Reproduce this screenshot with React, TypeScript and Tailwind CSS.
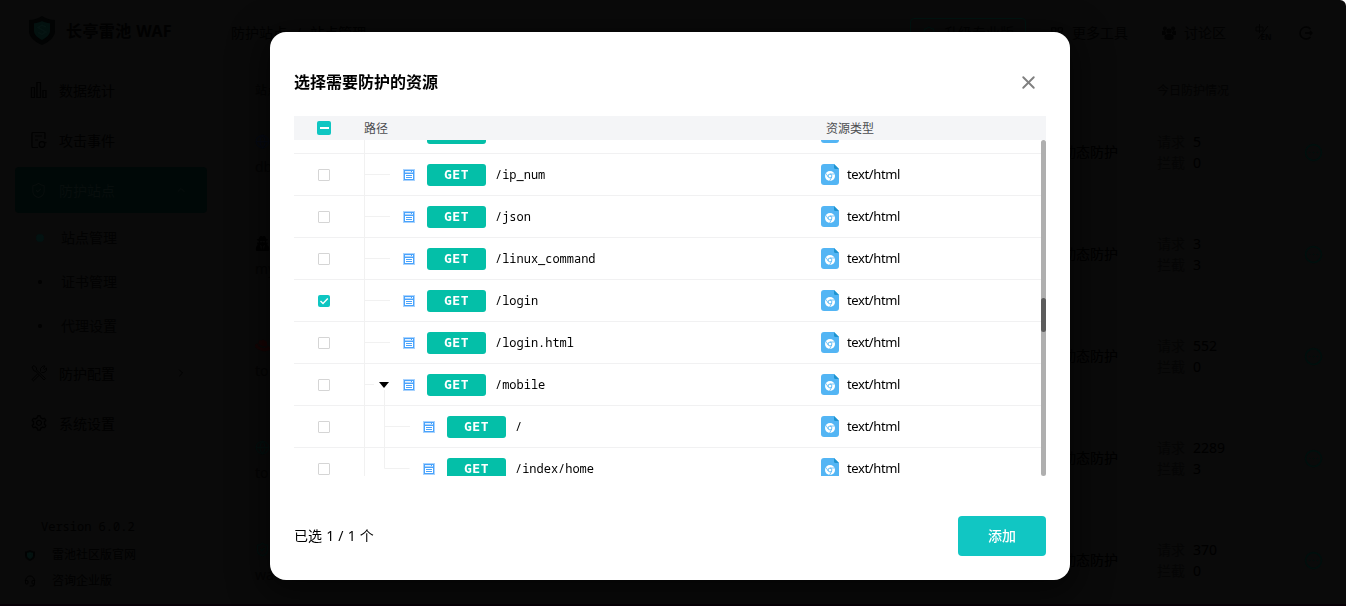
import React from 'react'
import { ChevronRight, ChevronUp, CircleEllipsis, Globe, Headset, LayoutGrid, ShieldCheck, X } from 'lucide-react'
import { FaRedhat, FaUserSecret } from 'react-icons/fa'
import { AiOutlineSetting } from 'react-icons/ai'

type Resource = {
  path: string
  child?: boolean
  last?: boolean
  open?: boolean
  checked?: boolean
}

const resources: Resource[] = [
  { path: '' },
  { path: '/ip_num' },
  { path: '/json' },
  { path: '/linux_command' },
  { path: '/login', checked: true },
  { path: '/login.html' },
  { path: '/mobile', open: true },
  { path: '/', child: true },
  { path: '/index/home', child: true, last: true },
]

const sites = [
  { name: 'db', requests: 5, blocked: 0, icon: <Globe size={15} className="text-[#070a14]" /> },
  { name: 'my', requests: 3, blocked: 3, icon: <FaUserSecret size={15} className="text-black" /> },
  { name: 'to', requests: 552, blocked: 0, icon: <FaRedhat size={15} className="text-[#160404]" /> },
  { name: 'to', requests: 2289, blocked: 3, icon: <Globe size={15} className="text-[#04100f]" /> },
  { name: 'wa', requests: 370, blocked: 0, icon: <ShieldCheck size={15} className="text-[#03100f]" /> },
]

const Logo = ({ className }: { className: string }) => (
  <svg viewBox="0 0 26 29" className={className}>
    <path d="M13 0c3 2.300 8 4 13 4v11c0 6-6 11-13 14C6 26 0 21 0 15V4c5 0 10-1.700 13-4z" fill="#020303" />
    <path d="M13 5c3 1.500 5 2 8 2.300V15c0 4-4 7-8 9-4-2-8-5-8-9V7.300C8 7 10 6.500 13 5z" fill="#03110f" />
    <path d="M17 11l-4-2-4 2.500 8 4.500-4 2.500-4-2" fill="none" stroke="#061513" strokeWidth="1.500" />
  </svg>
)

const BarsIcon = () => (
  <svg viewBox="0 0 18 18" className="h-[18px] w-[18px]" fill="none" stroke="currentColor" strokeWidth="1.200">
    <path d="M1.500 6.500h3v10h-3zM7 1.500h3.500v15H7zM13 9.500h3v7h-3z" />
  </svg>
)

const EventsIcon = () => (
  <svg viewBox="0 0 18 18" className="h-[18px] w-[18px]" fill="none" stroke="currentColor" strokeWidth="1.200">
    <path d="M15 8V2.500A1 1 0 0 0 14 1.500H3A1 1 0 0 0 2 2.500v13a1 1 0 0 0 1 1h5M5 5h7M5 9h3" />
    <circle cx="12" cy="13.500" r="2.800" />
    <path d="M14 11.500l2.500 0" />
  </svg>
)

const ToolsIcon = () => (
  <svg viewBox="0 0 18 18" className="h-[18px] w-[18px]" fill="none" stroke="currentColor" strokeWidth="1">
    <path d="M2 3l2-1.500L6.500 4v2L15.500 14.500 14 16 5.500 7H4z" />
    <path d="M10.500 7.500V4.500L13 2h2l-1.500 2.500 1 1L16.500 4v2.500L14 8.500h-2.500M7.500 10L2 15.500l1.500 1.300L9 11.500" />
  </svg>
)

const PeopleIcon = () => (
  <svg viewBox="0 0 14 14" className="h-[14px] w-[14px]" fill="currentColor">
    <circle cx="2.800" cy="2.500" r="1.900" />
    <circle cx="11.200" cy="2.500" r="1.900" />
    <circle cx="7" cy="5" r="2.600" />
    <path d="M0 9V6q0-1.500 3-1.500L4 7 3 9zM14 9V6q0-1.500-3-1.500L10 7l1 2zM2.500 13v-2.500Q2.500 8 7 8t4.500 2.500V13q-2 1-4.500 1T2.500 13z" />
  </svg>
)

const PageIcon = () => (
  <svg viewBox="0 0 12 12" className="block h-3 w-3 shrink-0" shapeRendering="crispEdges">
    <rect width="12" height="12" fill="#a9d3fe" />
    <rect x="1" y="1" width="10" height="10" fill="#4aa3fb" />
    <rect x="2" y="2" width="6" height="1" fill="#e6f2ff" />
    <rect x="9" y="2" width="1" height="1" fill="#fff" />
    <rect x="2" y="3" width="8" height="1" fill="#a9d3fe" />
    <rect x="2" y="5" width="8" height="5" fill="#fff" />
    <rect x="3" y="6" width="6" height="1" fill="#4aa3fb" />
    <rect x="3" y="8" width="6" height="1" fill="#4aa3fb" />
  </svg>
)

const HtmlIcon = () => (
  <svg viewBox="0 0 18 21" className="h-[21px] w-[18px] shrink-0">
    <path d="M3 0h10l5 5v13a3 3 0 0 1-3 3H3a3 3 0 0 1-3-3V3a3 3 0 0 1 3-3z" fill="#53b5f4" />
    <path d="M13 0l5 5h-3.500A1.500 1.500 0 0 1 13 3.500z" fill="#1f94d0" />
    <circle cx="9" cy="12" r="5" fill="#fff" />
    <circle cx="9" cy="12" r="1.900" fill="#fff" stroke="#53b5f4" strokeWidth="0.900" />
    <path d="M9 10h4.500M7.200 13L5 9.500M10.800 13l-2.200 4" stroke="#53b5f4" strokeWidth="0.800" />
  </svg>
)

const CheckBox = ({ checked }: { checked?: boolean }) =>
  checked ? (
    <span className="h-3 w-3 rounded-[2px] bg-[#0fc6c2]">
      <svg viewBox="0 0 12 12" className="h-3 w-3">
        <path d="M2.500 6l2.500 2.500L9.800 3.600" fill="none" stroke="#fff" strokeWidth="1.400" />
      </svg>
    </span>
  ) : (
    <span className="h-3 w-3 rounded-[1px] border border-[#d5d5d5]" />
  )

const TreeLines = ({ row }: { row: Resource }) => (
  <svg
    className={row.child ? 'h-[42px] w-[65px] shrink-0' : 'h-[42px] w-[45px] shrink-0'}
    fill="none"
    stroke="#f1f1f1"
  >
    <path d="M5.500 0v42" />
    {row.child && <path d={row.last ? 'M25.500 0v20.500h25' : 'M25.500 0v42M26 20.500h25'} />}
    {!row.child && <path d={row.open ? 'M6 20.500h9M25.500 26v16' : 'M6 20.500h25'} />}
    {row.open && <path d="M20 18h10l-5 6z" fill="#000" stroke="none" />}
  </svg>
)

const ResourceRow = ({ row }: { row: Resource }) => (
  <div className="flex h-[42px] shrink-0 items-center border-b border-[#f1f1f2]">
    <div className="flex w-[60px] shrink-0 justify-center">
      <CheckBox checked={row.checked} />
    </div>
    <div className="flex w-[467px] items-center pl-[5px]">
      <TreeLines row={row} />
      <span className="-ml-px">
        <PageIcon />
      </span>
      <span className="ml-3 flex h-[22px] w-[59px] items-center justify-center rounded-[3px] bg-[#04bfa8] font-[DejaVu_Sans_Mono,monospace] text-[13px] font-bold tracking-[0.5px] text-white">
        {row.path && 'GET'}
      </span>
      <span className="ml-[9px] font-[Noto_Sans_Mono,DejaVu_Sans_Mono,monospace] text-[12px] tracking-[-0.020px] text-black">
        {row.path}
      </span>
    </div>
    <HtmlIcon />
    <span className="ml-2 text-[13px] tracking-[-0.380px] text-black">{row.path && 'text/html'}</span>
  </div>
)

const ResourceDialog = () => (
  <div className="fixed inset-0 flex justify-center pr-[6px] pt-8">
    <div className="flex h-[548px] w-[800px] flex-col rounded-2xl bg-white px-6 text-black shadow-[0_8px_32px_8px_rgba(0,0,0,0.5)]">
      <div className="flex h-[84px] shrink-0 items-center justify-between pt-4">
        <h2 className="text-base font-bold">选择需要防护的资源</h2>
        <X size={21} strokeWidth={2.200} className="mr-[7px] text-[#808080]" />
      </div>
      <div className="flex h-6 shrink-0 items-center bg-[#f4f5f7] text-xs text-[#4c4d50]">
        <div className="flex w-[60px] justify-center">
          <span className="flex h-[14px] w-[14px] items-center justify-center rounded-[2px] bg-[#0fc6c2]">
            <span className="h-[2px] w-[9px] bg-white" />
          </span>
        </div>
        <span className="w-[462px] pl-[10px] pt-0.5">路径</span>
        <span className="pl-[10px] pt-0.5">资源类型</span>
      </div>
      <div className="flex h-[336px] shrink-0 overflow-hidden">
        <div className="-mt-7 flex w-[747px] flex-col">
          {resources.map((row) => (
            <ResourceRow key={row.path} row={row} />
          ))}
        </div>
        <div className="w-[5px] rounded-full bg-[#afafaf] pt-[158px]">
          <div className="h-[34px] w-[5px] rounded-full bg-[#5c5c5c]" />
        </div>
      </div>
      <div className="flex items-center justify-between pt-10">
        <span className="text-sm [word-spacing:0.500px]">已选 1 / 1 个</span>
        <button className="h-10 w-[88px] rounded bg-[#11c6c3] text-sm font-medium text-white">添加</button>
      </div>
    </div>
  </div>
)

const NavItem = ({ icon, label, arrow }: { icon: React.ReactNode; label: string; arrow?: React.ReactNode }) => (
  <div className="flex h-[50px] items-center pl-[15px] pr-5">
    <span className="w-[29px]">{icon}</span>
    <span className="flex-1 pt-px">{label}</span>
    {arrow}
  </div>
)

const SubItem = ({ label, active }: { label: string; active?: boolean }) => (
  <div className="flex h-11 items-center pl-[21px] text-[#020202]">
    <span className="flex w-[25px]">
      <span className={active ? 'h-2 w-2 rounded-full bg-[#031211]' : 'ml-0.5 h-1 w-1 rounded-full bg-[#020202]'} />
    </span>
    {label}
  </div>
)

const Sidebar = () => (
  <aside className="flex w-[222px] shrink-0 flex-col px-[15px] text-sm text-[#010101]">
    <div className="flex h-[65px] items-center pl-[14px]">
      <Logo className="mt-[-4px] h-[29px] w-[26px]" />
      <span className="ml-[11px] mt-[-3px] text-base font-bold tracking-[0.400px]">长亭雷池 WAF</span>
    </div>
    <NavItem icon={<BarsIcon />} label="数据统计" />
    <NavItem icon={<EventsIcon />} label="攻击事件" />
    <div className="my-0.5 flex h-[46px] flex-col justify-center rounded bg-[#000807] text-[#080e0d]">
      <NavItem icon={<ShieldCheck size={17} strokeWidth={1.500} />} label="防护站点" arrow={<ChevronUp size={12} />} />
    </div>
    <div className="pt-px">
      <SubItem label="站点管理" active />
      <SubItem label="证书管理" />
      <SubItem label="代理设置" />
    </div>
    <NavItem icon={<ToolsIcon />} label="防护配置" arrow={<ChevronRight size={12} />} />
    <NavItem icon={<AiOutlineSetting size={18} />} label="系统设置" />
    <div className="mt-auto pb-[10px] text-xs">
      <div className="h-[23px] pl-[26px] font-[Noto_Sans_Mono,DejaVu_Sans_Mono,monospace]">Version 6.0.2</div>
      <div className="flex h-[26px] items-center pl-[10px]">
        <Logo className="h-[11px] w-[10px]" />
        <span className="ml-[17px]">雷池社区版官网</span>
      </div>
      <div className="flex h-[26px] items-center pl-[9px]">
        <Headset size={12} />
        <span className="ml-4">咨询企业版</span>
      </div>
    </div>
  </aside>
)

const TopBar = () => (
  <header className="flex h-[65px] items-center pl-[9px] pr-[33px] text-sm text-[#020202]">
    <span>防护站点</span>
    <span className="mx-[9px]">/</span>
    <span className="text-black">站点管理</span>
    <div className="ml-auto flex h-[30px] w-[116px] items-center justify-center gap-2 rounded border border-[#001411]">
      <ShieldCheck size={14} className="text-[#001411]" />
      升级专业版
    </div>
    <LayoutGrid size={14} className="ml-6" />
    <span className="ml-2">更多工具</span>
    <span className="ml-[34px]">
      <PeopleIcon />
    </span>
    <span className="ml-[8px]">讨论区</span>
    <div className="ml-[29px] flex w-[18px] items-center">
      <svg viewBox="0 0 17 17" className="h-[17px] w-[17px]" fill="none" stroke="#020202">
        <path d="M1 3h7v4H1zM4.500 0v9M3 15L13 2" />
        <text x="5.500" y="16" fontSize="8" fontWeight="700" fill="#020202" stroke="none">EN</text>
      </svg>
    </div>
    <svg viewBox="0 0 14 14" className="ml-[26px] h-[14px] w-[14px]" fill="none" stroke="#020202" strokeWidth="1.500">
      <path d="M11.500 3a6 6 0 1 0 0 8M6 7h7M11 5l2 2-2 2" />
    </svg>
  </header>
)

const SiteTable = () => (
  <main className="flex-1 overflow-hidden pl-[33px] pr-[25px] text-sm">
    <div className="flex h-9 items-center justify-between pt-[16px] text-xs text-[#030303]">
      <span>站点</span>
      <span className="w-[164px]">今日防护情况</span>
    </div>
    {sites.map((site, i) => (
      <div key={i} className="flex h-[102px] items-center">
        <div className="w-[807px] pt-1.5">
          {site.icon}
          <div className="mt-2 text-[#040404]">{site.name}</div>
        </div>
        <span className="w-[95px] text-black">动态防护</span>
        <div className="leading-[21px] text-[#050505]">
          <div>
            请求<span className="ml-2 text-black">{site.requests}</span>
          </div>
          <div>
            拦截<span className="ml-2 text-black">{site.blocked}</span>
          </div>
        </div>
        <CircleEllipsis size={19} className="ml-auto mr-[-2px] text-[#000f0d]" />
      </div>
    ))}
  </main>
)

const App = () => {
  return (
    <div className="h-screen overflow-hidden bg-white font-[Noto_Sans,Noto_Sans_CJK_SC,sans-serif]">
      <div className="flex h-full overflow-hidden rounded-tr-[6px] border-b-2 border-[#070006] bg-[#0a0a0a]">
        <Sidebar />
        <div className="flex min-w-0 flex-1 flex-col">
          <TopBar />
          <SiteTable />
        </div>
      </div>
      <ResourceDialog />
    </div>
  )
}

export default App
